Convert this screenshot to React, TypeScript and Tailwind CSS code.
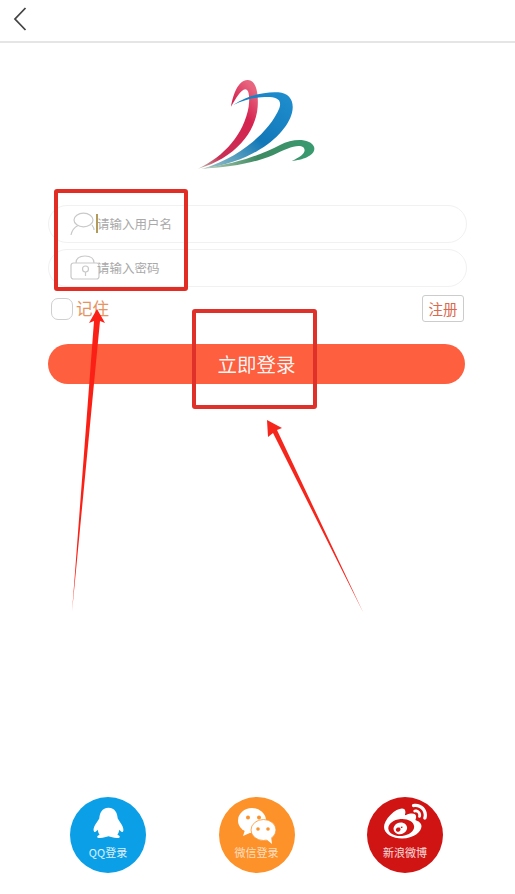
import { FaWeibo } from "react-icons/fa";

const font = { fontFamily: '"Noto Sans CJK SC", "Noto Sans", sans-serif' };

function Logo() {
  return (
    <svg width="170" height="120" viewBox="0 0 510 360" className="block blur-[0.5px] -ml-[5px]">
      <defs>
        <linearGradient id="r" x1="0.8" y1="0" x2="0" y2="1">
          <stop offset="0" stopColor="#e8657f" />
          <stop offset="0.25" stopColor="#d4234f" />
          <stop offset="0.75" stopColor="#c92f55" />
          <stop offset="1" stopColor="#b9c4b0" />
        </linearGradient>
        <linearGradient id="b" x1="1" y1="0" x2="0" y2="1">
          <stop offset="0" stopColor="#1f8fd0" />
          <stop offset="0.5" stopColor="#1278b8" />
          <stop offset="1" stopColor="#9fc4c4" />
        </linearGradient>
        <linearGradient id="g" x1="1" y1="0" x2="0" y2="0">
          <stop offset="0" stopColor="#3a9a70" />
          <stop offset="0.5" stopColor="#3d8a62" />
          <stop offset="1" stopColor="#c4d4c0" />
        </linearGradient>
      </defs>
      <path fill="url(#r)" d="M183 140 C190 100 205 62 232 60 C258 58 266 100 263 140 C258 215 195 295 84 326 C165 288 222 220 236 140 C240 108 236 88 226 88 C212 90 198 115 183 140Z" />
      <path fill="url(#b)" d="M190 135 C230 105 290 94 325 97 C360 100 374 125 366 158 C350 222 255 305 100 326 C215 290 300 212 328 145 C338 115 315 110 285 111 C250 112 220 120 190 135Z" />
      <path fill="url(#g)" d="M92 326 C200 312 280 282 330 255 C370 234 420 235 432 260 C440 285 400 300 365 303 C395 290 412 275 400 262 C385 250 350 265 310 285 C250 310 170 324 92 326Z" />
    </svg>
  );
}

function UserIcon() {
  return (
    <svg width="32" height="26" viewBox="0 0 32 26" fill="none" stroke="#c9c9c9" strokeWidth="1.2" className="shrink-0">
      <ellipse cx="13.5" cy="9" rx="9.5" ry="6.8" />
      <path d="M1 24 C2 19 5 16 8 14.5" />
      <path d="M22 14 C23.5 16 24 17 24 19" />
    </svg>
  );
}

function LockIcon() {
  return (
    <svg width="30" height="26" viewBox="0 0 30 26" fill="none" stroke="#c9c9c9" strokeWidth="1.2" className="shrink-0">
      <path d="M6 8 C6 3 10 1 15 1 C20 1 24 3 24 8" />
      <rect x="1" y="8" width="28" height="16" rx="2.5" />
      <circle cx="15.5" cy="14" r="3" />
      <path d="M15.5 17 V21" />
    </svg>
  );
}

function QQIcon() {
  return (
    <svg width="31" height="32" viewBox="98 64 94 95">
      <path
        fill="#fff"
        d="M145 65 C125 65 118 82 117 98 C108 112 98 125 100 135 C102 142 108 138 112 132 C114 140 116 145 118 147 C108 150 108 158 120 157 C130 157 138 154 145 152 C152 154 160 157 170 157 C182 158 182 150 172 147 C174 145 176 140 178 132 C182 138 188 142 190 135 C192 125 182 112 173 98 C172 82 165 65 145 65Z"
      />
    </svg>
  );
}

function WeChatIcon() {
  return (
    <svg width="40" height="38" viewBox="237 807 40 38" className="mt-[7px]">
      <ellipse cx="252" cy="820.5" rx="14" ry="12.5" fill="#fff" />
      <path fill="#fff" d="M245 830 L243 836 L252 832Z" />
      <ellipse cx="263.5" cy="830" rx="12.5" ry="10.5" fill="#fff" stroke="#fd922a" strokeWidth="0.8" />
      <path fill="#fff" d="M266 839 L272 844 L271 836Z" />
      <circle cx="248" cy="817.5" r="2" fill="#fd922a" />
      <circle cx="259" cy="817.5" r="2" fill="#fd922a" />
      <circle cx="258" cy="829" r="1.8" fill="#fd922a" />
      <circle cx="268" cy="829" r="1.8" fill="#fd922a" />
    </svg>
  );
}

function Social({ bg, label, labelColor, icon }: { bg: string; label: string; labelColor: string; icon: React.ReactNode }) {
  return (
    <div className={`w-[76px] h-[76px] rounded-full ${bg} flex flex-col items-center`}>
      <div className="h-[45px] mt-[3px] flex items-center justify-center">{icon}</div>
      <span className={`text-[11px] leading-[16px] -mt-[1px] ${labelColor}`}>{label}</span>
    </div>
  );
}

export default function App() {
  return (
    <div className="relative w-[515px] h-[894px] bg-white overflow-hidden flex flex-col" style={font}>
      <header className="h-[43px] shrink-0 border-b-2 border-[#e5e5e5] flex items-center pl-[12px] pb-[3px]">
        <svg width="16" height="24" viewBox="0 0 16 24" fill="none" stroke="#444" strokeWidth="1.8">
          <path d="M13.5 1 L3 12 L13.5 23" />
        </svg>
      </header>

      <div className="flex justify-center h-[147px] shrink-0 pt-[17px]">
        <Logo />
      </div>

      <div className="mx-[48px] w-[419px] flex flex-col gap-[6px] mt-[15px]">
        <div className="h-[38px] rounded-full border border-[#f1f1f1] flex items-center pl-[21px]">
          <UserIcon />
          <span className="relative text-[12.5px] text-[#a9a9a9] -ml-[5px]">
            <span className="absolute -left-[1px] -top-[1px] w-[2px] h-[19px] bg-[#b29a5c]" />
            请输入用户名
          </span>
        </div>
        <div className="h-[38px] rounded-full border border-[#f1f1f1] flex items-center pl-[21px]">
          <LockIcon />
          <span className="text-[12.5px] text-[#a9a9a9] -ml-[3px]">请输入密码</span>
        </div>
      </div>

      <div className="mx-[48px] w-[419px] flex items-center justify-between mt-[8px] h-[27px]">
        <div className="flex items-center pl-[3px] gap-[3px]">
          <div className="w-[22px] h-[22px] rounded-[7px] border border-[#cfcfcf]" />
          <span className="text-[16.5px] text-[#e8935f]">记住</span>
        </div>
        <div className="w-[42px] h-[27px] mr-[3px] rounded-[3px] border border-[#cccccc] flex items-center justify-center text-[14.5px] text-[#d9694f]">
          注册
        </div>
      </div>

      <button className="ml-[48px] w-[417px] h-[40px] mt-[22px] rounded-full bg-[#fd5f3f] text-white/95 text-[19.5px] flex items-center justify-center">
        立即登录
      </button>

      <div className="mt-auto mb-[21px] pl-[70px] pr-[72px] flex justify-between">
        <Social bg="bg-[#0a9fe6]" labelColor="text-white/85" label="QQ登录" icon={<QQIcon />} />
        <Social bg="bg-[#fd922a]" labelColor="text-white/70" label="微信登录" icon={<WeChatIcon />} />
        <Social bg="bg-[#d01414]" labelColor="text-white/85" label="新浪微博" icon={<FaWeibo size={43} color="#fff" />} />
      </div>

      {/* Annotations drawn over the page */}
      <div className="absolute left-[54px] top-[189px] w-[134px] h-[102px] border-[4px] border-[#e22d24] rounded-[3px]" />
      <div className="absolute left-[192px] top-[309px] w-[125px] h-[100px] border-[4px] border-[#e0302a] rounded-[3px]" />
      <svg className="absolute left-0 top-0 pointer-events-none" width="515" height="894" viewBox="0 0 515 894">
        <path fill="#fb2016" d="M97 309 L105 323 L100 321 L72 612 L94 321 L89 323 Z" />
        <path fill="#f5261c" d="M267 420 L282 428 L277 430 L363 612 L273 433 L268 437 Z" />
      </svg>
    </div>
  );
}
